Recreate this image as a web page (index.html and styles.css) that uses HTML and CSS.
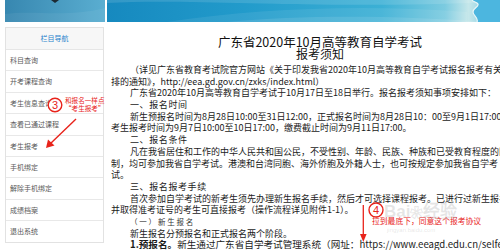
FILE: index.html
```html
<!DOCTYPE html>
<html lang="zh-CN">
<head>
<meta charset="utf-8">
<title>报考须知</title>
<link rel="stylesheet" href="styles.css">
</head>
<body>
<div class="page">
  <header class="banner">
    <div class="banner-left">
      <svg width="100" height="22" viewBox="0 0 100 22">
        <defs>
          <linearGradient id="gl" x1="0" y1="0" x2="1" y2="0">
            <stop offset="0" stop-color="#3787b0"/>
            <stop offset="1" stop-color="#5aaed1"/>
          </linearGradient>
        </defs>
        <rect width="100" height="22" fill="url(#gl)"/>
        <path d="M46 0 L54 0 L50 3 Z" fill="#1d2a33"/>
        <path d="M0 14 C30 10 60 18 100 8 L100 22 L0 22 Z" fill="#ffffff" opacity="0.06"/>
      </svg>
    </div>
    <div class="banner-right">
      <svg width="393" height="22" viewBox="0 0 393 22">
        <defs>
          <linearGradient id="gr" x1="0" y1="0" x2="1" y2="0">
            <stop offset="0" stop-color="#1689bf"/>
            <stop offset="0.35" stop-color="#229bcb"/>
            <stop offset="0.7" stop-color="#3cb0d5"/>
            <stop offset="0.86" stop-color="#7ccbe0"/>
            <stop offset="0.92" stop-color="#c6e7ea"/>
            <stop offset="1" stop-color="#5bbde0"/>
          </linearGradient>
        </defs>
        <rect width="393" height="22" fill="url(#gr)"/>
        <path d="M0 3 C90 -2 200 10 393 2 L393 0 L0 0 Z" fill="#ffffff" opacity="0.12"/>
        <path d="M60 22 C150 8 260 4 360 12 L360 22 Z" fill="#ffffff" opacity="0.08"/>
        <path d="M120 22 C200 14 300 16 380 22 Z" fill="#ffffff" opacity="0.1"/>
        <path d="M365 0 L393 0 L393 22 L370 22 C372 18 366 16 366 12 C366 8 372 7 371 4 C370 2 366 2 365 0 Z" fill="#4cb6df"/>
        <path d="M365 0 C366 2 370 2 371 4 C372 7 366 8 366 12 C366 16 372 18 370 22" fill="none" stroke="#e8f6f8" stroke-width="1.2"/>
      </svg>
    </div>
  </header>

  <div class="layout">
    <nav class="sidenav">
      <div class="nav-title">栏目导航</div>
      <ul class="nav-list">
        <li>科目查询</li>
        <li>开考课程查询</li>
        <li>考生信息查询</li>
        <li>查看已通过课程</li>
        <li>考生报考</li>
        <li>手机绑定</li>
        <li>解除手机绑定</li>
        <li>成绩档案</li>
        <li>退出系统</li>
      </ul>
    </nav>

    <main class="content">
      <h1 class="title">广东省2020年10月高等教育自学考试</h1>
      <h2 class="subtitle">报考须知</h2>
      <div class="line ind">（详见广东省教育考试院官方网站《关于印发我省2020年10月高等教育自学考试报名报考有关事项安</div>
      <div class="line">排的通知》，http://eea.gd.gov.cn/zxks/index.html）</div>
      <div class="line ind">广东省2020年10月高等教育自学考试于10月17日至18日举行。报名报考须知事项安排如下：</div>
      <div class="line ind sec">一、报名时间</div>
      <div class="line ind">新生预报名时间为8月28日10:00至31日12:00，正式报名时间为8月28日10：00至9月1日17:00，</div>
      <div class="line">考生报考时间为9月7日10:00至10日17:00，缴费截止时间为9月11日17:00。</div>
      <div class="line ind sec">二、报名条件</div>
      <div class="line ind">凡在我省居住和工作的中华人民共和国公民，不受性别、年龄、民族、种族和已受教育程度的限</div>
      <div class="line">制，均可参加我省自学考试。港澳和台湾同胞、海外侨胞及外籍人士，也可按规定参加我省自学考</div>
      <div class="line">试。</div>
      <div class="line ind sec">三、报名报考手续</div>
      <div class="line ind">首次参加自学考试的新考生须先办理新生报名手续，然后才可选择课程报考。已进行过新生报名</div>
      <div class="line">并取得准考证号的考生可直接报考（操作流程详见附件1-1）。</div>
      <div class="line ind sub">（一）新生报名</div>
      <div class="line ind">新生报名分预报名和正式报名两个阶段。</div>
      <div class="line ind big"><b>1.预报名。</b>新生通过广东省自学考试管理系统（网址：https://www.eeagd.edu.cn/selfec/，</div>
      <div class="line">以下简称管理系统）注册报名，完成预报名，此前已注册过的考生，可直接登录进行报名。</div>
    </main>
  </div>

  <div class="annot">
    <svg class="annot-svg" width="500" height="250" viewBox="0 0 500 250">
      <circle cx="55" cy="105" r="6.8" fill="#ffffff" stroke="#e8231b" stroke-width="1.4"/>
      <text x="55" y="109" text-anchor="middle" class="num">3</text>
      <line x1="76" y1="119" x2="50" y2="144" stroke="#e8231b" stroke-width="1.4"/>
      <path d="M46 148 L48 139.5 L54.5 145.5 Z" fill="#e8231b"/>
      <circle cx="376" cy="210" r="7" fill="#ffffff" stroke="#e8231b" stroke-width="1.4"/>
      <text x="376" y="214.2" text-anchor="middle" class="num">4</text>
      <line x1="363.3" y1="205" x2="363.3" y2="235" stroke="#e8231b" stroke-width="1.3"/>
      <path d="M360 234 L366.6 234 L363.3 242 Z" fill="#e8231b"/>
    </svg>
    <div class="note note-3">和报名一样点<br>“考生报考”</div>
    <div class="note note-4">拉到最底下，同意这个报考协议</div>
    <div class="wm wm-big">Bai<span class="paw">❀</span>经验</div>
    <div class="wm wm-small">jingyan.baidu.com</div>
  </div>
</div>
</body>
</html>
```

FILE: styles.css
```css
html, body {
  margin: 0;
  padding: 0;
  background: #ffffff;
}

body {
  font-family: "Noto Sans CJK SC", "Noto Sans", sans-serif;
  color: #1b1b1b;
  overflow: hidden;
}

.page {
  position: relative;
  width: 500px;
  height: 250px;
  overflow: hidden;
  padding-left: 5px;
  box-sizing: border-box;
}

.banner {
  display: flex;
  gap: 2px;
  height: 22px;
}

.banner svg {
  display: block;
}

.banner-left {
  flex: 0 0 100px;
}

.banner-right {
  flex: 0 0 393px;
}

.layout {
  display: flex;
  gap: 7px;
  align-items: flex-start;
}

.sidenav {
  flex: 0 0 99px;
  margin-top: 5px;
  border: 1px solid #e2e2e2;
  box-sizing: border-box;
  background: #ffffff;
}

.nav-title {
  height: 21px;
  line-height: 21px;
  text-align: center;
  font-size: 7px;
  color: #2a83cc;
  background: #f7f7f7;
  border-bottom: 1px solid #e6e6e6;
}

.nav-list {
  list-style: none;
  margin: 0;
  padding: 0;
}

.nav-list li {
  height: 20.4px;
  line-height: 20.4px;
  padding-left: 4px;
  font-size: 7px;
  color: #5a5a5a;
  border-bottom: 1px solid #e8e8e8;
}

.nav-list li:last-child {
  border-bottom: none;
}

.content {
  flex: 0 0 400px;
  padding-top: 12.5px;
  white-space: nowrap;
}

.title {
  margin: 0;
  font-size: 12.5px;
  font-weight: normal;
  line-height: 13px;
  text-align: center;
  color: #111;
}

.subtitle {
  margin: 0 0 4px;
  font-size: 12px;
  font-weight: normal;
  line-height: 12.5px;
  text-align: center;
  color: #111;
}

.line {
  font-size: 9px;
  line-height: 11.7px;
  height: 11.7px;
}

.line.ind {
  text-indent: 19px;
}

.line.sec {
  letter-spacing: 0.6px;
}

.line.sub {
  font-size: 7.5px;
  letter-spacing: 1.8px;
  color: #333;
}

.line.big {
  font-size: 9.6px;
}

.line.big b {
  font-weight: bold;
}

.annot {
  position: absolute;
  left: 0;
  top: 0;
  width: 500px;
  height: 250px;
  pointer-events: none;
}

.annot-svg {
  position: absolute;
  left: 0;
  top: 0;
}

.num {
  font-family: "Liberation Sans", sans-serif;
  font-size: 11px;
  fill: #e8231b;
}

.note {
  position: absolute;
  color: #e8231b;
  white-space: nowrap;
}

.note-3 {
  left: 65px;
  top: 97px;
  font-size: 6.6px;
  line-height: 7.6px;
}

.note-4 {
  left: 372px;
  top: 216px;
  font-size: 7.8px;
  line-height: 10px;
}

.wm {
  position: absolute;
  white-space: nowrap;
  color: rgba(140, 140, 140, 0.22);
}

.wm-big {
  left: 384px;
  top: 202px;
  font-family: "Liberation Sans", sans-serif;
  font-size: 17px;
  font-weight: bold;
  line-height: 20px;
}

.paw {
  font-size: 13px;
}

.wm-small {
  left: 387px;
  top: 226px;
  font-family: "Liberation Sans", sans-serif;
  font-size: 6px;
  line-height: 8px;
}
```
